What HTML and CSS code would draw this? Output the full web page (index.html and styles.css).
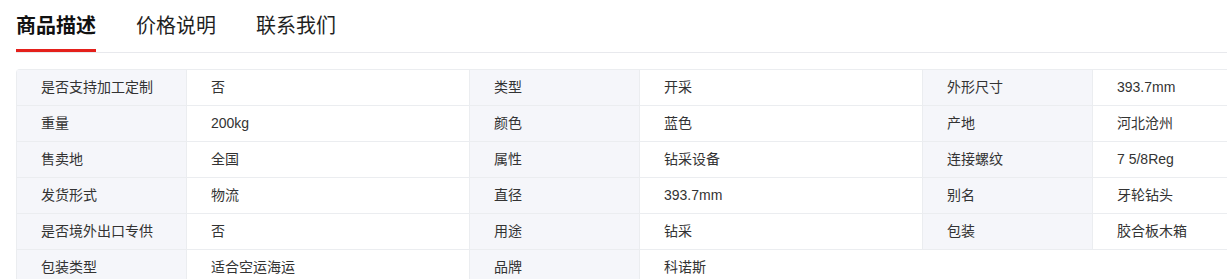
FILE: index.html
```html
<!DOCTYPE html>
<html lang="zh-CN">
<head>
<meta charset="utf-8">
<title>商品描述</title>
<link rel="stylesheet" href="styles.css">
</head>
<body>
<div class="page">
  <div class="tabs">
    <div class="tab active">商品描述</div>
    <div class="tab">价格说明</div>
    <div class="tab">联系我们</div>
  </div>
  <div class="params">
    <div class="item"><div class="k">是否支持加工定制</div><div class="v">否</div></div>
    <div class="item"><div class="k">类型</div><div class="v">开采</div></div>
    <div class="item"><div class="k">外形尺寸</div><div class="v">393.7mm</div></div>
    <div class="item"><div class="k">重量</div><div class="v">200kg</div></div>
    <div class="item"><div class="k">颜色</div><div class="v">蓝色</div></div>
    <div class="item"><div class="k">产地</div><div class="v">河北沧州</div></div>
    <div class="item"><div class="k">售卖地</div><div class="v">全国</div></div>
    <div class="item"><div class="k">属性</div><div class="v">钻采设备</div></div>
    <div class="item"><div class="k">连接螺纹</div><div class="v">7 5/8Reg</div></div>
    <div class="item"><div class="k">发货形式</div><div class="v">物流</div></div>
    <div class="item"><div class="k">直径</div><div class="v">393.7mm</div></div>
    <div class="item"><div class="k">别名</div><div class="v">牙轮钻头</div></div>
    <div class="item"><div class="k">是否境外出口专供</div><div class="v">否</div></div>
    <div class="item"><div class="k">用途</div><div class="v">钻采</div></div>
    <div class="item"><div class="k">包装</div><div class="v">胶合板木箱</div></div>
    <div class="item"><div class="k">包装类型</div><div class="v">适合空运海运</div></div>
    <div class="item"><div class="k">品牌</div><div class="v">科诺斯</div></div>
  </div>
</div>
</body>
</html>
```
FILE: styles.css
```css
html, body {
  margin: 0;
  padding: 0;
  background: #ffffff;
}
body {
  font-family: "Liberation Sans", "Noto Sans CJK SC", sans-serif;
  color: #333333;
  overflow: hidden;
}
.page {
  width: 1211px;
  padding-left: 16px;
  overflow: hidden;
}
.tabs {
  display: flex;
  gap: 40px;
  border-bottom: 1px solid #e8e9ed;
}
.tab {
  font-family: "Noto Sans CJK SC", sans-serif;
  font-size: 20px;
  line-height: 28px;
  padding-top: 11px;
  padding-bottom: 10px;
  border-bottom: 3px solid transparent;
  color: #1f1f1f;
}
.tab.active {
  font-weight: bold;
  color: #111111;
  border-bottom-color: #e4201b;
}
.params {
  margin-top: 16px;
  width: 1360px;
  display: grid;
  grid-template-columns: repeat(3, 453px);
  border-top: 1px solid #ebedf0;
  border-top-left-radius: 4px;
  overflow: hidden;
}
.item {
  display: flex;
  height: 36px;
}
.k, .v {
  box-sizing: border-box;
  height: 36px;
  line-height: 35px;
  border-bottom: 1px solid #ebedf0;
  border-left: 1px solid #ebedf0;
  padding-left: 24px;
  font-size: 14px;
  white-space: nowrap;
}
.k {
  width: 170px;
  background: #f5f6fa;
}
.v {
  width: 283px;
}
```
